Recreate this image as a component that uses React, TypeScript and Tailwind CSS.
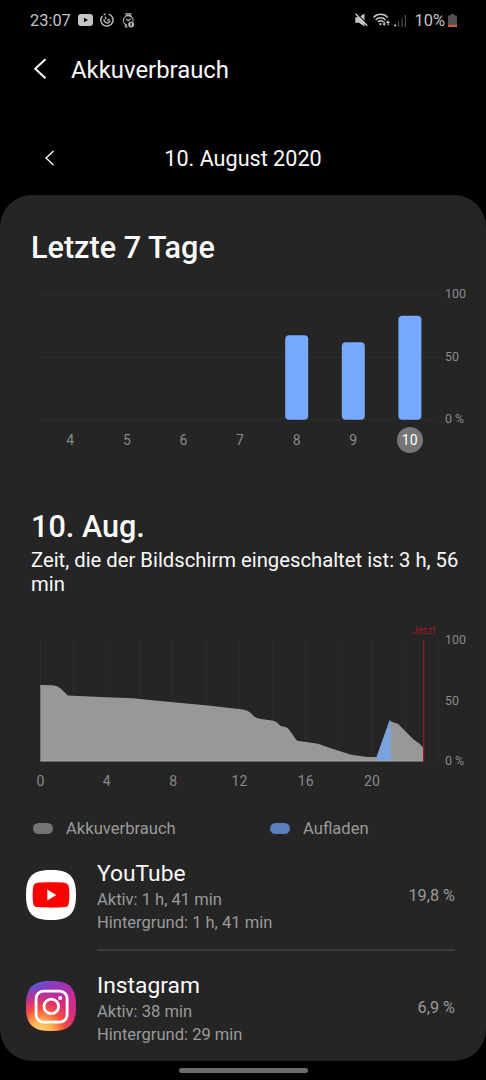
import { ReactNode } from 'react';

const days = [
  { label: '4', value: 0 },
  { label: '5', value: 0 },
  { label: '6', value: 0 },
  { label: '7', value: 0 },
  { label: '8', value: 84.5 },
  { label: '9', value: 77.5 },
  { label: '10', value: 104 },
];

const hours = ['0', '4', '8', '12', '16', '20'];

function StatusBar() {
  return (
    <div className="flex h-10 items-center pl-[30px] pr-[29px] text-[16.4px] text-[#c4c4c4]">
      <span className="pt-[2px] leading-none">23:07</span>
      <svg className="ml-[7px]" width="15" height="12" viewBox="0 0 15 12">
        <rect width="15" height="12" rx="3" fill="#c4c4c4" />
        <path d="M6 3.7v4.6L10 6z" fill="#000" />
      </svg>
      <svg className="ml-[7px]" width="14" height="14" viewBox="0 0 14 14" fill="none" stroke="#b8b8b8" strokeWidth="1.5">
        <path d="M8.6 1.1a6.1 6.1 0 1 1-6.2 1.8M3.6 1.9a6 6 0 0 1 2.2-.9" />
        <path d="M4.2 6.2a3 3 0 0 0 5.8 1.6M7 7.6l2.6-1.2M5.4 3.6l.4 2.5" />
      </svg>
      <svg className="ml-[8px]" width="13" height="15" viewBox="0 0 13 15" fill="none" stroke="#b0b0b0" strokeWidth="1.2">
        <path d="M3.2.9h6.4M3.5 2.4h5.8M5 12.1A4.8 4.8 0 1 1 11 8.4M3.4 12v1.8h2.2" />
        <path d="M4.3 6l2 1.8L9 5.6" />
        <circle cx="9.2" cy="11.4" r="3" fill="#b0b0b0" stroke="none" />
        <path d="M9.2 9.7v3.4" stroke="#222" />
      </svg>

      <svg className="ml-auto" width="13" height="14" viewBox="0 0 13 14">
        <path d="M.3 4.2h3.400L9.5.6v12.800L4 9.8H.3z" fill="#c4c4c4" />
        <path d="M1.400 0L13 11.800" stroke="#000" strokeWidth="1.200" />
        <path d="M.5.8L12.300 12.800" stroke="#c4c4c4" strokeWidth="1.500" />
      </svg>
      <svg className="ml-[5px]" width="17" height="14" viewBox="0 0 17 14" fill="none" stroke="#c4c4c4" strokeWidth="1.5">
        <path d="M.6 4.4a9.6 9.6 0 0 1 14 0M2.6 6.9a6.8 6.8 0 0 1 10 0M4.9 9a4 4 0 0 1 5.6 0" />
        <circle cx="7.4" cy="11.2" r="1.1" fill="#c4c4c4" stroke="none" />
        <path d="M11.2 8.6v3M15 12.4V9" strokeWidth="1.1" />
        <path d="M9.3 10.4h3.8l-1.9 2.6zM13 10l2-2.8L17 10z" fill="#c4c4c4" stroke="none" />
      </svg>
      <svg className="ml-[4px]" width="12" height="13" viewBox="0 0 12 13">
        <circle cx="1.2" cy="11.5" r="1.1" fill="#d0d0d0" />
        <path d="M4.5 7.5V13M8 4.2V13M11.4 1v12" stroke="#505050" strokeWidth="1.1" />
      </svg>
      <span className="ml-[9px] pt-[2px] leading-none">10%</span>
      <svg className="ml-[3px]" width="9" height="13" viewBox="0 0 9 13">
        <path d="M2.5 0h4v1.5H9V13H0V1.5h2.5z" fill="#505050" />
        <path d="M0 10.8h9V13H0z" fill="#cf5a3c" />
      </svg>
    </div>
  );
}

function AxisLabels({ className }: { className: string }) {
  return (
    <div className={`flex flex-col justify-between text-[12.4px] leading-[14px] text-[#8a8a8a] ${className}`}>
      <span>100</span>
      <span>50</span>
      <span>0 %</span>
    </div>
  );
}

function WeekChart() {
  return (
    <div className="mt-[21px] h-[168px]">
      <div className="flex pl-10">
        <svg width="399" height="139" viewBox="40 287 399 139">
          <path d="M40 294.5h398M40 357.5h398M40 419.5h398" stroke="#2d2d2d" />
          {days.map((day, i) => (
            <rect
              key={day.label}
              x={58.8 + i * 56.6}
              y={419.7 - day.value}
              width="23"
              height={day.value}
              rx="4"
              fill="#76a9ff"
            />
          ))}
        </svg>
        <AxisLabels className="ml-[6px] h-[139px]" />
      </div>
      <div className="ml-[42px] grid w-[396px] grid-cols-7 text-center text-[14px] text-[#8a8a8a]">
        {days.map((day) => (
          <div key={day.label} className="flex justify-center pt-px">
            <span
              className={
                day.label === '10'
                  ? 'size-[26px] rounded-full bg-[#767676] leading-[26px] text-white'
                  : 'size-[26px] leading-[26px]'
              }
            >
              {day.label}
            </span>
          </div>
        ))}
      </div>
    </div>
  );
}

function DayChart() {
  return (
    <div className="mt-[26px]">
      <div className="flex pl-[30px]">
        <svg width="411" height="142" viewBox="30 622 411 142">
          {Array.from({ length: 13 }, (_, i) => (
            <path key={i} d={`M${40.5 + i * 33.15} 640v121`} stroke="#2d2d2d" />
          ))}
          {/* Akkuverbrauch */}
          <path
            d="M40.3 685L52 685.3Q57 685.4 60 688L68 695.5L100 697L133 698.3L160 701L208 705.5L243 709.5Q247 709.8 250.5 712.7L253.7 716Q256 718.5 261 719L272 720.4Q275 720.8 277 722.5L280.3 725.7L286.3 727.3Q288.5 728.3 290 730.8L296.3 740Q298 741.2 301.3 741.3L318 743.7L333 749L351.3 754.7L367 757H376.7L389.7 720.3L392 722L398 723.7L413 739L419.7 743.7L423.3 747.7V761.3H40.3z"
            fill="#989898"
          />
          {/* Aufladen */}
          <path d="M376.5 757.3L389.7 720.3L390.8 721.5V761H376.5z" fill="#7ba2df" />
          <path d="M40.3 761h383" stroke="#a8a8a8" strokeWidth="0.8" />
          <path d="M423.7 640v121.5" stroke="#8e1c28" strokeWidth="1.3" />
          <text x="423.7" y="634" textAnchor="middle" fontSize="10.8" fill="#961626">
            Jetzt
          </text>
        </svg>
        <AxisLabels className="ml-[4px] mt-[11px] h-[135px]" />
      </div>
      <div className="ml-[20.5px] mt-[5px] flex text-center text-[14px] leading-4 text-[#8a8a8a]">
        {hours.map((hour) => (
          <span key={hour} className="mr-[26.3px] w-10">
            {hour}
          </span>
        ))}
      </div>
    </div>
  );
}

function AppRow({ icon, name, active, background, usage, last }: {
  icon: ReactNode;
  name: string;
  active: string;
  background: string;
  usage: string;
  last?: boolean;
}) {
  return (
    <div className={`flex pl-[26px] ${last ? 'h-[111px]' : 'h-28'}`}>
      <div className={`size-[50px] shrink-0 ${last ? 'mt-[30px]' : 'mt-[31px]'}`}>{icon}</div>
      <div className={`ml-[21px] mr-[31px] flex flex-1 items-center justify-between text-[#9a9a9a] ${last ? '' : 'border-b-2 border-[#3b3b3b]'}`}>
        <div className="pt-[5px]">
          <h3 className="text-[22.8px] leading-[28px] text-[#fafafa]">{name}</h3>
          <p className="text-[16.55px] leading-[23px]">Aktiv: {active}</p>
          <p className="text-[16.55px] leading-[23px]">Hintergrund: {background}</p>
        </div>
        <span className="pt-[4px] text-[16.3px]">{usage}</span>
      </div>
    </div>
  );
}

const squircle = 'M25 0C43.5 0 50 6.5 50 25S43.5 50 25 50 0 43.5 0 25 6.5 0 25 0z';

function YouTubeIcon() {
  return (
    <svg width="50" height="50" viewBox="0 0 50 50">
      <path d={squircle} fill="#fff" />
      <path d="M25 12.3c-7 0-12 .2-14.2.6-2.2.4-3.2 1.6-3.6 3.6-.8 4.7-.8 12.3 0 17 .4 2 1.4 3.2 3.6 3.6 4.2.8 24.2.8 28.4 0 2.2-.4 3.2-1.6 3.6-3.6.8-4.7.8-12.3 0-17-.4-2-1.4-3.2-3.6-3.6-2.2-.4-7.2-.6-14.200-.6z" fill="#f00" />
      <path d="M21.3 19.6v10.8L30.3 25z" fill="#fff" />
    </svg>
  );
}

function InstagramIcon() {
  return (
    <svg width="50" height="50" viewBox="0 0 50 50">
      <defs>
        <linearGradient id="ig-base" x1="0.1" y1="0" x2="0.9" y2="1">
          <stop offset="0" stopColor="#4268d8" />
          <stop offset="0.25" stopColor="#8a3ac0" />
          <stop offset="0.6" stopColor="#c82c96" />
          <stop offset="1" stopColor="#de2d78" />
        </linearGradient>
        <radialGradient id="ig-glow" cx="0.3" cy="1.05" r="0.95">
          <stop offset="0" stopColor="#ffdc7c" />
          <stop offset="0.25" stopColor="#ffb650" />
          <stop offset="0.5" stopColor="#f9543c" />
          <stop offset="0.75" stopColor="#e02c70" stopOpacity="0.7" />
          <stop offset="1" stopColor="#c82c96" stopOpacity="0" />
        </radialGradient>
      </defs>
      <path d={squircle} fill="url(#ig-base)" />
      <path d={squircle} fill="url(#ig-glow)" />
      <g fill="none" stroke="#fff" strokeWidth="2.8">
        <rect x="10.1" y="10.1" width="31" height="31" rx="7.5" />
        <circle cx="25.3" cy="25.4" r="7.3" />
      </g>
      <circle cx="34.2" cy="17" r="2" fill="#fff" />
    </svg>
  );
}

export default function App() {
  return (
    <div className="flex h-[1080px] w-[486px] flex-col overflow-hidden bg-black font-[Roboto,sans-serif] text-[#fafafa]">
      <StatusBar />

      {/* Header */}
      <header className="flex h-[60px] items-center pl-[33px]">
        <svg className="-mt-[2px]" width="14" height="22" viewBox="0 0 14 22" fill="none" stroke="#fafafa" strokeWidth="2">
          <path d="M12.5 1.2L2.2 10.8l10.300 9.400" />
        </svg>
        <h1 className="ml-6 pt-px text-[23.9px]">Akkuverbrauch</h1>
      </header>

      {/* Datum */}
      <div className="mt-[38px] flex h-10 items-center">
        <svg className="-mt-px ml-[44px]" width="11" height="16" viewBox="0 0 11 16" fill="none" stroke="#fafafa" strokeWidth="1.4">
          <path d="M9.5 1L2 8l7.5 7" />
        </svg>
        <span className="mr-[55px] flex-1 pt-[2px] text-center text-[21.6px]">10. August 2020</span>
      </div>

      <main className="mt-[17px] h-[866px] shrink-0 rounded-[32px] bg-[#252525]">
        <h2 className="pl-[31px] pt-[34px] text-[30.6px] font-medium leading-[37px]">Letzte 7 Tage</h2>
        <WeekChart />

        <h2 className="mt-[53px] pl-[31px] text-[30.6px] font-medium leading-[37px]">10. Aug.</h2>
        <p className="mt-[3px] pl-[31px] pr-[20px] text-[20.25px] leading-[24px]">
          Zeit, die der Bildschirm eingeschaltet ist: 3 h, 56 min
        </p>
        <DayChart />

        {/* Legende */}
        <div className="mt-[30px] flex h-5 items-center text-[16.6px] text-[#9a9a9a]">
          <span className="-mt-px ml-[33px] h-[11px] w-5 rounded-full bg-[#747474]" />
          <span className="ml-[13px] w-[204px]">Akkuverbrauch</span>
          <span className="-mt-px h-[11px] w-5 rounded-full bg-[#5b7fbd]" />
          <span className="ml-[13px]">Aufladen</span>
        </div>

        <AppRow icon={<YouTubeIcon />} name="YouTube" active="1 h, 41 min" background="1 h, 41 min" usage="19,8 %" />
        <AppRow icon={<InstagramIcon />} name="Instagram" active="38 min" background="29 min" usage="6,9 %" last />
      </main>

      <div className="mx-auto mt-[7px] h-[5px] w-[129px] shrink-0 rounded-full bg-[#6b6b6b]" />
    </div>
  );
}
